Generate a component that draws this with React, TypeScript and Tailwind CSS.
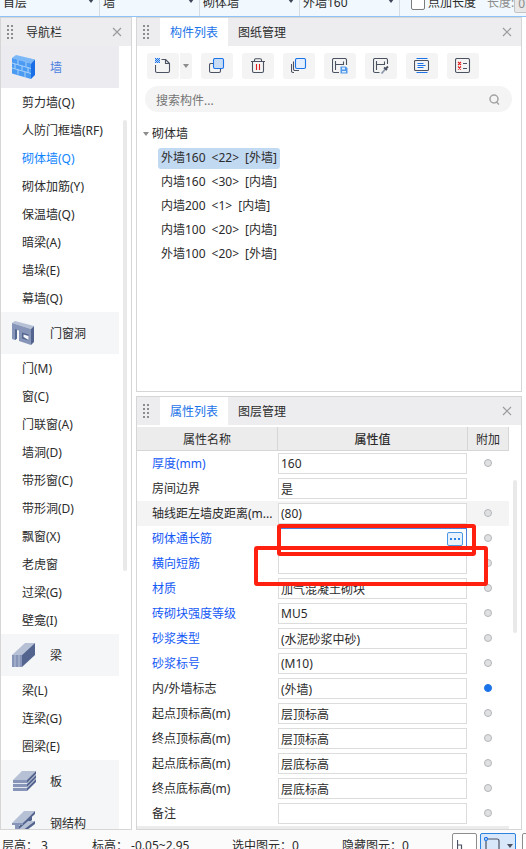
import React from 'react';

const INK = '#4b5262';
const BLUE = '#1a73e8';

function Grip() {
  return (
    <svg className="ml-1.5 shrink-0" width="8" height="14" viewBox="0 0 8 14" fill="#8d8d8d" aria-hidden="true">
      {[0, 4, 8, 12].map((y) => (
        <g key={y}>
          <rect x="0" y={y} width="2" height="2" />
          <rect x="4" y={y} width="2" height="2" />
        </g>
      ))}
    </svg>
  );
}

function CloseButton() {
  return (
    <button type="button" aria-label="关闭" className="flex h-7 w-7 shrink-0 items-center justify-center">
      <svg width="10" height="10" viewBox="0 0 10 10" stroke="#9b9b9b" strokeWidth="1.2" fill="none">
        <path d="M1 1l8 8M9 1l-8 8" />
      </svg>
    </button>
  );
}

function Caret({ color }: { color: string }) {
  return (
    <svg width="6" height="4" viewBox="0 0 6 4" fill={color} aria-hidden="true">
      <path d="M0 0h6L3 4z" />
    </svg>
  );
}

function Glyph({ children }: { children: React.ReactNode }) {
  return (
    <svg width="16" height="16" viewBox="0 0 16 16" fill="none" stroke={INK} strokeWidth="1.1" strokeLinejoin="round" aria-hidden="true">
      {children}
    </svg>
  );
}

const checker = [0, 1, 2, 3, 4].flatMap((r) =>
  [0, 1, 2, 3, 4].filter((c) => (r + c) % 2 === 0).map((c) => ({ r, c })),
);

function NewIcon() {
  return (
    <Glyph>
      <rect x="0" y="0" width="5" height="5" fill="#b7d4f8" stroke="none" />
      <g fill={BLUE} stroke="none">
        {checker.map(({ r, c }) => (
          <rect key={r * 5 + c} x={c} y={r} width="1" height="1" />
        ))}
      </g>
      <path d="M0.5 7v6a1.5 1.5 0 0 0 1.500 1.500h11a1.500 1.500 0 0 0 1.500-1.500V5.500L10.500 1.500H6.500M10.500 1.500V5.500H14.500" />
    </Glyph>
  );
}

function CopyIcon() {
  return (
    <Glyph>
      <path d="M4.500 5.500H2A1.500 1.500 0 0 0 .500 7v6A1.500 1.500 0 0 0 2 14.500h8a1.500 1.500 0 0 0 1.500-1.500V11" />
      <rect x="4.500" y="0.500" width="10" height="10" rx="1.500" fill="#c9dcf5" stroke={BLUE} />
    </Glyph>
  );
}

function TrashIcon() {
  return (
    <Glyph>
      <path d="M1 3.500h14M4.500 3.500V2A1.300 1.300 0 0 1 5.800.700h4.400A1.300 1.300 0 0 1 11.500 2v1.500M2.500 3.500V13A1.500 1.500 0 0 0 4 14.500h8A1.500 1.500 0 0 0 13.500 13V3.500" />
      <path d="M6.500 6v6M9.500 6v6" stroke="#e02020" />
    </Glyph>
  );
}

function LayersIcon() {
  return (
    <Glyph>
      <path d="M.5 6v7A1.500 1.500 0 0 0 2 14.500H3M2.500 3.500v7.500a1.500 1.500 0 0 0 1.500 1.500H8" />
      <rect x="4.500" y="0.500" width="10" height="10" rx="1.500" fill="#e3effd" stroke={BLUE} />
    </Glyph>
  );
}

function SaveIcon() {
  return (
    <Glyph>
      <path d="M7 14.500H2A1.500 1.500 0 0 1 .500 13V2A1.500 1.500 0 0 1 2 .500h11A1.500 1.500 0 0 1 14.500 2v5M3.500 3v9M3.500 6.500H11M11.500 3.500V7" />
      <path d="M8.500 8.500h5L15.500 10v5.500h-7z" fill="#4f97ea" stroke="none" />
      <path d="M10 9.500h3v2h-3zM10 13h4v1.500h-4z" fill="#dcebfc" stroke="none" />
    </Glyph>
  );
}

function PickIcon() {
  return (
    <Glyph>
      <path d="M6.500 14.500H2A1.500 1.500 0 0 1 .500 13V2A1.500 1.500 0 0 1 2 .500h11A1.500 1.500 0 0 1 14.500 2v4M3.500 3v9M3.500 6.500H11M11.500 3.500V7" />
      <path d="M8.500 15.500l4-4.500" stroke="#8d99ac" strokeWidth="1.800" />
      <path d="M11 9.500l3 2.500M12.500 11l2.500-2.500" strokeWidth="1.800" />
    </Glyph>
  );
}

function AlignIcon() {
  return (
    <Glyph>
      <path d="M2.500.500h11M2.500 14.500h11" stroke={BLUE} />
      <rect x="0.500" y="2.500" width="14" height="10" rx="1" />
      <path d="M3.500 5.500h6M3.500 7.500h8M3.500 9.500h6" stroke={BLUE} strokeWidth="1" />
    </Glyph>
  );
}

function ChecklistIcon() {
  return (
    <Glyph>
      <rect x="0.500" y="0.500" width="14" height="14" rx="1.500" />
      <path d="M3 4l3 3M6 4l-3 3M3 8.500l3 3M6 8.500l-3 3" stroke="#e02020" />
      <path d="M8 5.500h4M8 10.500h4" />
    </Glyph>
  );
}

function WallIcon() {
  return (
    <svg width="24" height="24" viewBox="0 0 24 24" aria-hidden="true">
      <path d="M0 3L4 0l19 4.500-4 4z" fill="#7bb8f8" />
      <path d="M0 3l19 5.500V24L0 18.500z" fill="#4b9bf3" />
      <path d="M19 8.500l4-4V20l-4 4z" fill="#1a6fe6" />
      <path d="M0 8l19 5.500M0 13l19 5.500M6 5v4.500M14 7v4.500M3 9v4.500M10 11v4.500M16 12.500v5M6 14.500v5M13 17v5" stroke="#a9d2fb" strokeWidth="1" fill="none" />
    </svg>
  );
}

function OpeningIcon() {
  return (
    <svg width="24" height="24" viewBox="0 0 24 24" aria-hidden="true">
      <path d="M0 2L3 0l19 5-3 3z" fill="#b7c1d6" />
      <path d="M19 8l3-3v16l-3 3z" fill="#53658f" />
      <path d="M0 2l19 6v16L7 20V9.500L5 9v8.500L3 19l-3-1z" fill="#8695b8" />
      <path d="M3 8l2 .7V17.500L3 19z" fill="#53658f" />
      <path d="M10 11.500l6.500 2v6l-6.500-2z" fill="#53658f" />
      <path d="M11.500 13.500l5 1.500v4l-5-3z" fill="#f4f6f9" />
    </svg>
  );
}

function BeamIcon() {
  return (
    <svg width="24" height="24" viewBox="0 0 24 24" aria-hidden="true">
      <path d="M0 12L13 0h10L10 12z" fill="#b7c1d6" />
      <path d="M10 12L23 0v12L10 24z" fill="#53658f" />
      <path d="M0 12h10v12H0z" fill="#8695b8" />
      <path d="M3 12v12M7 12v12" stroke="#b7c1d6" />
    </svg>
  );
}

function SlabIcon() {
  return (
    <svg width="24" height="24" viewBox="0 0 24 24" aria-hidden="true">
      {[8, 4, 0].map((y) => (
        <g key={y}>
          <path d={`M1 ${11 + y}L10 ${2 + y}h14L15 ${11 + y}z`} fill={y === 0 ? '#b7c1d6' : '#e3e8f1'} />
          <path d={`M15 ${11 + y}l9-9v3l-9 9z`} fill="#53658f" />
          <path d={`M1 ${11 + y}h14v3H1z`} fill="#8695b8" />
        </g>
      ))}
    </svg>
  );
}

function SteelIcon() {
  return (
    <svg width="24" height="24" viewBox="0 0 24 24" aria-hidden="true">
      <path d="M7 15L20 5v4L10 19H7z" fill="#53658f" />
      <path d="M0 12L12 0h11L11 12z" fill="#b7c1d6" />
      <path d="M11 12L23 0v3L11 14z" fill="#53658f" />
      <path d="M7 18l9-8h7L11 19z" fill="#b7c1d6" />
      <path d="M11 19l12-9v3l-12 9z" fill="#53658f" />
      <path d="M0 12h11v2H7v5h4v3H0v-3h3v-5H0z" fill="#8695b8" />
    </svg>
  );
}

const groups = [
  {
    title: '墙',
    icon: <WallIcon />,
    active: true,
    items: ['剪力墙(Q)', '人防门框墙(RF)', '砌体墙(Q)', '砌体加筋(Y)', '保温墙(Q)', '暗梁(A)', '墙垛(E)', '幕墙(Q)'],
  },
  {
    title: '门窗洞',
    icon: <OpeningIcon />,
    items: ['门(M)', '窗(C)', '门联窗(A)', '墙洞(D)', '带形窗(C)', '带形洞(D)', '飘窗(X)', '老虎窗', '过梁(G)', '壁龛(I)'],
  },
  { title: '梁', icon: <BeamIcon />, items: ['梁(L)', '连梁(G)', '圈梁(E)'] },
  { title: '板', icon: <SlabIcon />, items: [] },
  { title: '钢结构', icon: <SteelIcon />, items: [] },
];

const components = [
  { name: '外墙160', count: '<22>', kind: '[外墙]' },
  { name: '内墙160', count: '<30>', kind: '[内墙]' },
  { name: '内墙200', count: '<1>', kind: '[内墙]' },
  { name: '内墙100', count: '<20>', kind: '[内墙]' },
  { name: '外墙100', count: '<20>', kind: '[外墙]' },
];

type Property = { name: string; value: string; blue?: boolean; dot?: 'on' | 'none'; shaded?: boolean; editing?: boolean };

const properties: Property[] = [
  { name: '厚度(mm)', value: '160', blue: true },
  { name: '房间边界', value: '是', dot: 'none' },
  { name: '轴线距左墙皮距离(m...', value: '(80)', shaded: true },
  { name: '砌体通长筋', value: '', blue: true, editing: true },
  { name: '横向短筋', value: '', blue: true },
  { name: '材质', value: '加气混凝土砌块', blue: true },
  { name: '砖砌块强度等级', value: 'MU5', blue: true },
  { name: '砂浆类型', value: '(水泥砂浆中砂)', blue: true },
  { name: '砂浆标号', value: '(M10)', blue: true },
  { name: '内/外墙标志', value: '(外墙)', dot: 'on' },
  { name: '起点顶标高(m)', value: '层顶标高' },
  { name: '终点顶标高(m)', value: '层顶标高' },
  { name: '起点底标高(m)', value: '层底标高' },
  { name: '终点底标高(m)', value: '层底标高' },
  { name: '备注', value: '' },
];

function TopSelect({ label, value }: { label: string; value: string }) {
  return (
    <div className="relative w-[100px] shrink-0 border-r border-[#d5dce3]">
      <select aria-label={label} className="h-[26px] w-full appearance-none bg-transparent pl-[3px] outline-none" defaultValue={value}>
        <option>{value}</option>
      </select>
      <span className="pointer-events-none absolute right-[5px] bottom-[13px] flex">
        <Caret color="#3d4557" />
      </span>
    </div>
  );
}

function PanelTabs({ tabs }: { tabs: string[] }) {
  return (
    <div className="flex h-7 shrink-0 items-center bg-[#ededf0]" role="tablist">
      <Grip />
      <div className="flex h-full flex-1 pl-[9px]">
        {tabs.map((tab, i) => (
          <button
            key={tab}
            type="button"
            role="tab"
            aria-selected={i === 0}
            className={i === 0 ? 'bg-white px-2.5 pt-0.5 text-[#1a73e8]' : 'px-2.5 pt-0.5'}
          >
            {tab}
          </button>
        ))}
      </div>
      <CloseButton />
    </div>
  );
}

function Tool({ label, children }: { label: string; children: React.ReactNode }) {
  return (
    <button type="button" aria-label={label} className="flex h-[26px] w-8 items-center justify-center rounded-[3px] bg-[#f4f4f4]">
      {children}
    </button>
  );
}

function Sidebar() {
  return (
    <nav className="flex w-[132px] shrink-0 flex-col border border-[#d6d6d6] bg-white">
      <div className="flex h-7 shrink-0 items-center bg-[#ededf0]">
        <Grip />
        <h2 className="flex-1 pt-0.5 pl-[11px]">导航栏</h2>
        <CloseButton />
      </div>
      <div className="flex min-h-0 flex-1 overflow-hidden">
        <div className="flex-1">
          {groups.map((g) => (
            <section key={g.title}>
              <h3 className={`flex h-[42px] items-center gap-3.5 pl-[11px] ${g.active ? 'bg-[#ebebf0] text-[#4a7fe0]' : 'bg-[#f4f6f8]'}`}>
                {g.icon}
                <span className="pt-0.5">{g.title}</span>
              </h3>
              <ul>
                {g.items.map((item) => (
                  <li key={item}>
                    <a href="#" className={`flex h-7 items-center pt-0.5 pl-[21px] whitespace-nowrap ${item === '砌体墙(Q)' ? 'text-[#0f84ff]' : ''}`}>
                      {item}
                    </a>
                  </li>
                ))}
              </ul>
            </section>
          ))}
        </div>
        <div className="w-3 shrink-0 pt-[74px] pl-1">
          <div className="h-[451px] w-1 rounded-full bg-[#e9e9e9]" />
        </div>
      </div>
    </nav>
  );
}

function ComponentPanel() {
  return (
    <section className="flex min-h-0 flex-1 flex-col border border-[#d6d6d6] bg-white">
      <PanelTabs tabs={['构件列表', '图纸管理']} />
      <div className="flex gap-[9px] px-2.5 pt-[7px]">
        <div className="flex gap-px">
          <Tool label="新建"><NewIcon /></Tool>
          <button type="button" aria-label="新建选项" className="flex h-[26px] w-3 items-center justify-center rounded-r-[3px] bg-[#f4f4f4]">
            <Caret color="#8d8d8d" />
          </button>
        </div>
        <Tool label="复制"><CopyIcon /></Tool>
        <Tool label="删除"><TrashIcon /></Tool>
        <Tool label="层间复制"><LayersIcon /></Tool>
        <Tool label="存档"><SaveIcon /></Tool>
        <Tool label="提取"><PickIcon /></Tool>
        <Tool label="排序"><AlignIcon /></Tool>
        <Tool label="过滤"><ChecklistIcon /></Tool>
      </div>
      <div className="mr-[9px] ml-2 mt-[7px] flex h-[26px] shrink-0 items-center rounded-full bg-[#f4f4f4] pr-3 pl-[11px]">
        <input aria-label="搜索构件" placeholder="搜索构件..." className="h-full min-w-0 flex-1 bg-transparent pt-0.5 outline-none placeholder:text-[#757575]" />
        <svg width="11" height="11" viewBox="0 0 11 11" fill="none" stroke="#a3a3a3" strokeWidth="1.5" aria-hidden="true">
          <circle cx="5" cy="5" r="4" />
          <path d="M7 7.500l3 3" />
        </svg>
      </div>
      <div className="pt-2.5 pl-1.5">
        <div className="flex h-6 items-center gap-[3px]">
          <Caret color="#8d8d8d" />
          砌体墙
        </div>
        <ul className="pl-[15px]">
          {components.map((c, i) => (
            <li key={c.name} className="flex h-6 items-center">
              <button type="button" className={`flex h-[21px] items-center gap-1.5 rounded-[3px] px-[3px] ${i === 0 ? 'bg-[#c2d9f2]' : ''}`}>
                <span>{c.name}</span>
                <span>{c.count}</span>
                <span>{c.kind}</span>
              </button>
            </li>
          ))}
        </ul>
      </div>
    </section>
  );
}

function PropertyPanel() {
  return (
    <section className="relative flex shrink-0 flex-col border border-[#d6d6d6] bg-white">
      <PanelTabs tabs={['属性列表', '图层管理']} />
      <div className="flex pt-0.5">
        <div className="min-w-0 flex-1">
          <table className="w-full table-fixed border-separate border-spacing-0">
            <thead>
              <tr className="h-6 bg-[#ececec]">
                <th className="w-[141px] border-r border-b border-[#d6d6d6] p-0 pt-0.5 font-normal">属性名称</th>
                <th className="border-r border-b border-[#d6d6d6] p-0 pt-0.5 font-medium">属性值</th>
                <th className="w-[41px] border-r border-b border-[#d6d6d6] p-0 pt-0.5 font-normal">附加</th>
              </tr>
            </thead>
            <tbody>
              {properties.map((p, i) => (
                <tr key={p.name} className={`h-[25px] ${p.shaded ? 'bg-[#f4f4f4]' : ''}`}>
                  <td className="p-0 pl-[15px] whitespace-nowrap">
                    <label htmlFor={`prop-${i}`} className={p.blue ? 'text-[#1559f5]' : ''}>{p.name}</label>
                  </td>
                  <td className="p-0">
                    <div className={`mr-px flex h-[21px] items-center border bg-white ${p.editing ? 'border-[#4a80dc]' : 'border-[#dcdcdc]'}`}>
                      <input id={`prop-${i}`} defaultValue={p.value} className="h-full min-w-0 flex-1 bg-transparent pl-0.5 outline-none" />
                      {p.editing && (
                        <button type="button" aria-label="更多" className="mr-[3px] flex h-3.5 w-4 items-center justify-center gap-0.5 rounded-[2px] border border-[#4a97e6] bg-[#e8f2fd]">
                          <i className="h-0.5 w-0.5 bg-[#2b82e0]" />
                          <i className="h-0.5 w-0.5 bg-[#2b82e0]" />
                          <i className="h-0.5 w-0.5 bg-[#2b82e0]" />
                        </button>
                      )}
                    </div>
                  </td>
                  <td className="p-0 pr-0.5 pb-px">
                    {p.dot !== 'none' && (
                      <span className={`mx-auto block h-2 w-2 rounded-full border ${p.dot === 'on' ? 'border-[#1a73e8] bg-[#1a73e8]' : 'border-[#b4b6b9] bg-[#dfe0e2]'}`} />
                    )}
                  </td>
                </tr>
              ))}
            </tbody>
          </table>
          <div className="h-[3px] bg-[#ececec]" />
        </div>
        <div className="w-3 shrink-0 pt-[53px] pl-1">
          <div className="h-[153px] w-1 rounded-full bg-[#e9e9e9]" />
        </div>
      </div>
      <div className="pointer-events-none absolute top-[127px] right-[45px] left-[140px] h-8 rounded-[3px] border-4 border-[#ff2010]" />
      <div className="pointer-events-none absolute top-[149px] right-[33px] left-[117px] h-10 rounded-[3px] border-4 border-[#ff2010]" />
    </section>
  );
}

export default function App() {
  return (
    <div className="flex h-screen flex-col overflow-hidden bg-white font-['Noto_Sans','Noto_Sans_CJK_SC',sans-serif] text-xs leading-4 text-[#2b2b2b]">
      <header className="flex h-[17px] shrink-0 items-end overflow-hidden border-b border-[#8fc3f7] bg-[#f1f9fe]">
        <TopSelect label="楼层" value="首层" />
        <TopSelect label="类别" value="墙" />
        <TopSelect label="构件类型" value="砌体墙" />
        <TopSelect label="构件" value="外墙160" />
        <label className="ml-[11px] flex h-[26px] shrink-0 items-center gap-[3px] whitespace-nowrap">
          <input type="checkbox" className="h-3.5 w-3.5 appearance-none rounded-[2px] border border-[#7c7c7c] bg-white" />
          点加长度
        </label>
        <label className="ml-[11px] flex h-[26px] shrink-0 items-center whitespace-nowrap text-[#8d8d8d]">
          长度:
          <input disabled defaultValue="0" className="h-5 w-16 rounded-[2px] border border-[#c4c4c4] bg-[#e8e8e8] pl-[3px]" />
        </label>
      </header>

      <main className="flex min-h-0 flex-1 gap-1 pr-1">
        <Sidebar />
        <div className="flex min-w-0 flex-1 flex-col gap-1">
          <ComponentPanel />
          <PropertyPanel />
        </div>
      </main>

      <footer className="flex h-[19px] shrink-0 items-start overflow-hidden bg-[#fbfbfb] whitespace-nowrap">
        <div className="flex h-8 min-w-0 flex-1 items-center">
          <span className="w-[90px] shrink-0 pl-0.5">层高： 3</span>
          <span className="w-[140px] shrink-0 pl-0.5">标高： -0.05~2.95</span>
          <span className="w-[110px] shrink-0 pl-0.5">选中图元：0</span>
          <span className="shrink-0 pl-0.5">隐藏图元：0</span>
        </div>
        <div className="-mr-[21px] flex shrink-0 gap-[3px] pt-[3px]">
          <button type="button" aria-label="正交" className="flex h-6 w-[25px] items-start rounded-[2px] border border-[#8d8d8d] bg-white pt-1.5 pl-1">
            <svg width="8" height="14" viewBox="0 0 8 14" fill="none" stroke={INK} strokeWidth="1.2">
              <path d="M0.500 0v12M0.500 5h4v7" />
            </svg>
          </button>
          <button type="button" aria-label="框选" className="flex h-6 w-9 items-start gap-[7px] rounded-[2px] border border-[#2b82e0] bg-[#d9e7fb] pt-[3px] pl-[3px]">
            <svg width="16" height="16" viewBox="0 0 16 16" fill="none" stroke={INK} strokeWidth="1.2">
              <path d="M4 2h9a2 2 0 0 1 2 2v11M2 4v11" />
              <circle cx="2" cy="2" r="1.500" stroke={BLUE} />
            </svg>
            <span className="pt-[7px]"><Caret color={INK} /></span>
          </button>
          <button type="button" aria-label="更多工具" className="ml-[3px] h-6 w-[25px] rounded-[2px] border border-[#8d8d8d] bg-white" />
        </div>
      </footer>
    </div>
  );
}
